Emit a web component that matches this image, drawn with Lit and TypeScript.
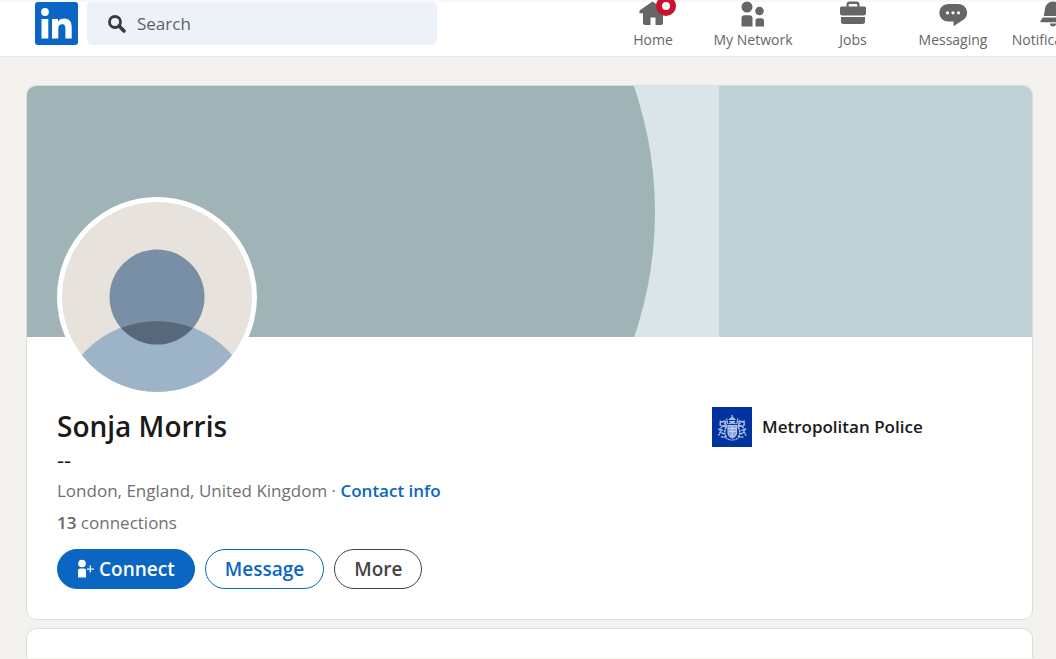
import { LitElement, html, css, svg, type TemplateResult } from "lit";
import { customElement } from "lit/decorators.js";

interface NavItem {
  label: string;
  icon: TemplateResult;
  badge?: boolean;
}

const NAV: NavItem[] = [
  {
    label: "Home",
    badge: true,
    icon: svg`<path d="M14.500 1.500 27.500 10.600v2.600h-2.500v9.800a2 2 0 0 1-2 2h-5.500v-7.500h-5V25H7a2 2 0 0 1-2-2V13.200H1.500v-2.600z"/>`,
  },
  {
    label: "My Network",
    icon: svg`<circle cx="9" cy="7" r="5.500"/><circle cx="21.500" cy="11" r="4.300"/><path d="M3.500 26.500V18.200a3 3 0 0 1 3-3h5a3 3 0 0 1 3 3v8.300zM17.500 26.500v-5.800a2.500 2.500 0 0 1 2.500-2.500h3.500a2.500 2.500 0 0 1 2.500 2.500v5.800z"/>`,
  },
  {
    label: "Jobs",
    icon: svg`<path fill-rule="evenodd" d="M8.500 6.500V4.500a3 3 0 0 1 3-3h7a3 3 0 0 1 3 3v2H26.500a1.500 1.500 0 0 1 1.500 1.500v5a2.500 2.500 0 0 1-2.500 2.500H4.500a2.500 2.500 0 0 1-2.500-2.500V8a1.500 1.500 0 0 1 1.500-1.500zm2.200 0h8.600V5a1 1 0 0 0-1-1h-6.600a1 1 0 0 0-1 1zM3 17h24v4.500a2.500 2.500 0 0 1-2.500 2.500h-19A2.500 2.500 0 0 1 3 21.500z"/>`,
  },
  {
    label: "Messaging",
    icon: svg`<path fill-rule="evenodd" d="M10 4h10a8.800 8.800 0 0 1 3.500 17L15.500 26.300V21.500H10A8.750 8.750 0 0 1 10 4zM9.500 11.200a1.600 1.600 0 1 0 0 3.200 1.600 1.600 0 0 0 0-3.200zm5.500 0a1.600 1.600 0 1 0 0 3.200 1.600 1.600 0 0 0 0-3.200zm5.500 0a1.600 1.600 0 1 0 0 3.200 1.600 1.600 0 0 0 0-3.200z"/>`,
  },
  {
    label: "Notifications",
    icon: svg`<path d="M15 1.500a8 8 0 0 1 8 7l1.200 7.500H5.800L7 8.500a8 8 0 0 1 8-7zM4.800 17.500h20.400l2.300 3.200v1.500h-25v-1.500zM12 23.500h6a3 3 0 0 1-6 0z"/>`,
  },
];

@customElement("top-bar")
export class TopBar extends LitElement {
  static styles = css`
    :host {
      display: block;
      background: #fff;
      border-bottom: 1px solid #e8e8e6;
      overflow: hidden;
    }
    .bar {
      display: flex;
      align-items: flex-start;
      height: 56px;
      padding-left: 35px;
      box-sizing: border-box;
      box-shadow: inset 0 2px 1px #f8f8f8;
    }
    .logo {
      flex: none;
      display: block;
      width: 43px;
      height: 43px;
      margin: 2px 9px 0 0;
    }
    .logo svg {
      display: block;
    }
    .search {
      flex: none;
      display: flex;
      align-items: center;
      gap: 10px;
      width: 350px;
      height: 43px;
      margin-top: 2px;
      padding-left: 20px;
      box-sizing: border-box;
      border-radius: 5px;
      background: #edf2f9;
    }
    .search svg {
      flex: none;
    }
    .field {
      flex: 1;
      min-width: 0;
      border: 0;
      padding: 0;
      outline: 0;
      background: none;
      color: #555;
      font: 17px/24px "Open Sans", "Noto Sans", sans-serif;
    }
    .field::placeholder {
      color: #5e6064;
      opacity: 1;
    }
    .nav {
      flex: none;
      display: flex;
      margin-left: 166px;
    }
    .item {
      position: relative;
      display: flex;
      flex-direction: column;
      align-items: center;
      width: 100px;
      color: #666;
      font: 14px/20px "Open Sans", "Noto Sans", sans-serif;
      text-decoration: none;
      white-space: nowrap;
    }
    .item svg {
      display: block;
      fill: currentColor;
    }
    .badge {
      position: absolute;
      top: -4px;
      left: 53px;
      width: 8px;
      height: 8px;
      border: 6px solid #cb112d;
      border-radius: 50%;
      background: #fff;
    }
  `;

  render() {
    return html`
      <header class="bar">
        <a class="logo" href="#" aria-label="LinkedIn">
          <svg width="43" height="43" viewBox="0 0 43 43">
            <rect width="43" height="43" rx="3" fill="#0a66c2" />
            <g fill="#fff">
              <circle cx="10" cy="10" r="3.900" />
              <rect x="6.500" y="17" width="6.800" height="19.500" />
              <path d="M17 17h6v2.700c1.200-2 3.400-3.200 6.200-3.200 5.800 0 7.500 3.600 7.500 9.300v10.700h-6.300v-9.700c0-2.700-.6-4.600-3.300-4.600-2.800 0-3.800 2-3.800 4.600v9.700H17z" />
            </g>
          </svg>
        </a>
        <label class="search">
          <svg width="20" height="20" viewBox="0 0 20 20" fill="none" stroke="#383b3e" aria-label="Search">
            <circle cx="8" cy="8" r="5.500" stroke-width="2.800" />
            <path d="M12 12l5 5" stroke-width="3.600" stroke-linecap="round" />
          </svg>
          <input class="field" type="text" placeholder="Search" />
        </label>
        <nav class="nav">
          ${NAV.map(
            (n) => html`<a class="item" href="#">
              <svg width="30" height="30" viewBox="0 0 30 30">${n.icon}</svg>
              ${n.badge ? html`<span class="badge"></span>` : null}
              <span>${n.label}</span>
            </a>`
          )}
        </nav>
      </header>
    `;
  }
}

@customElement("profile-card")
export class ProfileCard extends LitElement {
  static styles = css`
    :host {
      display: block;
      background: #fff;
      border: 1px solid #dcdcd8;
      border-radius: 10px;
      overflow: hidden;
      color: #1a1a1a;
      font: 17px/24px "Open Sans", "Noto Sans", sans-serif;
    }
    .cover {
      display: block;
      width: 100%;
      height: 251px;
    }
    .body {
      padding: 0 30px 30px;
    }
    .avatar {
      position: relative;
      display: block;
      width: 190px;
      height: 190px;
      margin-top: -140px;
      border: 5px solid #fff;
      border-radius: 50%;
      overflow: hidden;
      background: #e7e2dc;
    }
    .avatar svg {
      display: block;
    }
    .columns {
      display: grid;
      grid-template-columns: 655px 1fr;
      margin-top: 8px;
    }
    .name {
      margin: 0;
      font-size: 28px;
      line-height: 42px;
      font-weight: 600;
    }
    .line {
      margin: 0;
      font-size: 22px;
    }
    .muted {
      margin: 8px 0 0;
      color: #707070;
    }
    .muted b {
      font-weight: 600;
      color: #666;
    }
    .link {
      color: #0a66c2;
      font-weight: 600;
      text-decoration: none;
    }
    .org {
      display: flex;
      align-items: center;
      align-self: start;
      gap: 10px;
      margin-top: 2px;
      color: #1a1a1a;
      font-weight: 600;
      text-decoration: none;
    }
    .actions {
      display: flex;
      gap: 10px;
      margin-top: 14px;
    }
    .btn {
      display: flex;
      align-items: center;
      gap: 5px;
      height: 40px;
      padding: 0 19px;
      border: 1px solid currentColor;
      border-radius: 20px;
      background: #fff;
      font: 600 19px/24px "Open Sans", "Noto Sans", sans-serif;
    }
    .primary {
      background: #0a66c2;
      border-color: #0a66c2;
      color: #fff;
    }
    .outline {
      color: #0a66c2;
    }
    .plain {
      color: #444;
    }
  `;

  render() {
    return html`
      <svg class="cover" viewBox="0 0 1005 251" preserveAspectRatio="xMidYMid slice" aria-hidden="true">
        <rect width="1005" height="251" fill="#d9e5e7" />
        <rect x="692" width="313" height="251" fill="#bfd1d5" />
        <circle cx="242" cy="126" r="386" fill="#a0b4b7" />
      </svg>
      <div class="body">
        <div class="avatar">
          <svg width="190" height="190" viewBox="0 0 190 190" aria-label="Profile photo">
            <defs>
              <clipPath id="head"><circle cx="95" cy="95" r="47.500" /></clipPath>
            </defs>
            <circle cx="95" cy="95" r="47.500" fill="#788fa5" />
            <circle cx="95" cy="219" r="100" fill="#9db3c8" />
            <circle cx="95" cy="219" r="100" fill="#56687a" clip-path="url(#head)" />
          </svg>
        </div>
        <div class="columns">
          <div>
            <h1 class="name">Sonja Morris</h1>
            <p class="line">--</p>
            <p class="muted">London, England, United Kingdom · <a class="link" href="#">Contact info</a></p>
            <p class="muted"><b>13</b> connections</p>
          </div>
          <a class="org" href="#">
            <svg width="40" height="40" viewBox="0 0 40 40" aria-hidden="true">
              <rect width="40" height="40" fill="#0032a0" />
              <g fill="none" stroke="#b4c3ea" stroke-width="1.200">
                <path d="M16 18.500h8.500v7.500q0 3-4.200 5q-4.300-2-4.300-5z" fill="#8fa6dc" />
                <path d="M17 21.500h7M17 24.500h7M20.200 19v11" stroke="#dbe3f6" stroke-width=".7" />
                <path d="M17 17q3.200-3 6.500 0M17.500 14.500h5.500M17.500 12.500q2.700-4 5.400 0zM20.200 8v3" fill="#7f98d6" />
                <path d="M14.500 30q-3-4-1-8t-2.500-7.500q-3.500.5-3 3.500l3.500 1q-4 2-3 5.500l-2 4M11 23.500l-5-1.500M12 27l-4-2M9 30h5M12 18l2 3M9 16l-1-3" stroke-width="1.500" stroke-dasharray="2.200 .5" />
                <path d="M26 30q3-4 1-8t2.500-7.500q3.500.5 3 3.500l-3.500 1q4 2 3 5.500l2 4M29.500 23.500l5-1.500M28.500 27l4-2M26.500 30h5M28.500 18l-2 3M31.500 16l1-3" stroke-width="1.500" stroke-dasharray="2.200 .5" />
                <path d="M16 17q-2-4-5-2.500M24.500 17q2-4 5-2.500M14.500 20l-1.500-7M26 20l1.500-7M15.500 15l-1-4M25 15l1-4M14 31q6.200 4 12.500 0" stroke-dasharray="1.600 .5" />
              </g>
            </svg>
            <span>Metropolitan Police</span>
          </a>
        </div>
        <div class="actions">
          <button class="btn primary" type="button">
            <svg width="17" height="20" viewBox="0 0 17 20" fill="#fff" aria-hidden="true">
              <circle cx="5" cy="4.500" r="3.800" />
              <path d="M1 18.500v-7a2 2 0 0 1 2-2h4a2 2 0 0 1 2 2v7zM12.700 6.500h1.300v2.900h2.800v1.300H14v2.900h-1.300v-2.900H9.900v-1.300h2.800z" />
            </svg>
            <span>Connect</span>
          </button>
          <button class="btn outline" type="button">Message</button>
          <button class="btn plain" type="button">More</button>
        </div>
      </div>
    `;
  }
}

@customElement("app-root")
export class AppRoot extends LitElement {
  static styles = css`
    :host {
      display: block;
      min-height: 100vh;
      background: #f3f2ee;
    }
    .page {
      display: flex;
      flex-direction: column;
      gap: 8px;
      padding: 28px 23px 0 26px;
    }
    .next {
      min-height: 30px;
      background: #fff;
      border: 1px solid #dcdcd8;
      border-bottom: 0;
      border-radius: 10px 10px 0 0;
      box-sizing: border-box;
    }
  `;

  render() {
    return html`
      <top-bar></top-bar>
      <main class="page">
        <profile-card></profile-card>
        <section class="next"></section>
      </main>
    `;
  }
}
